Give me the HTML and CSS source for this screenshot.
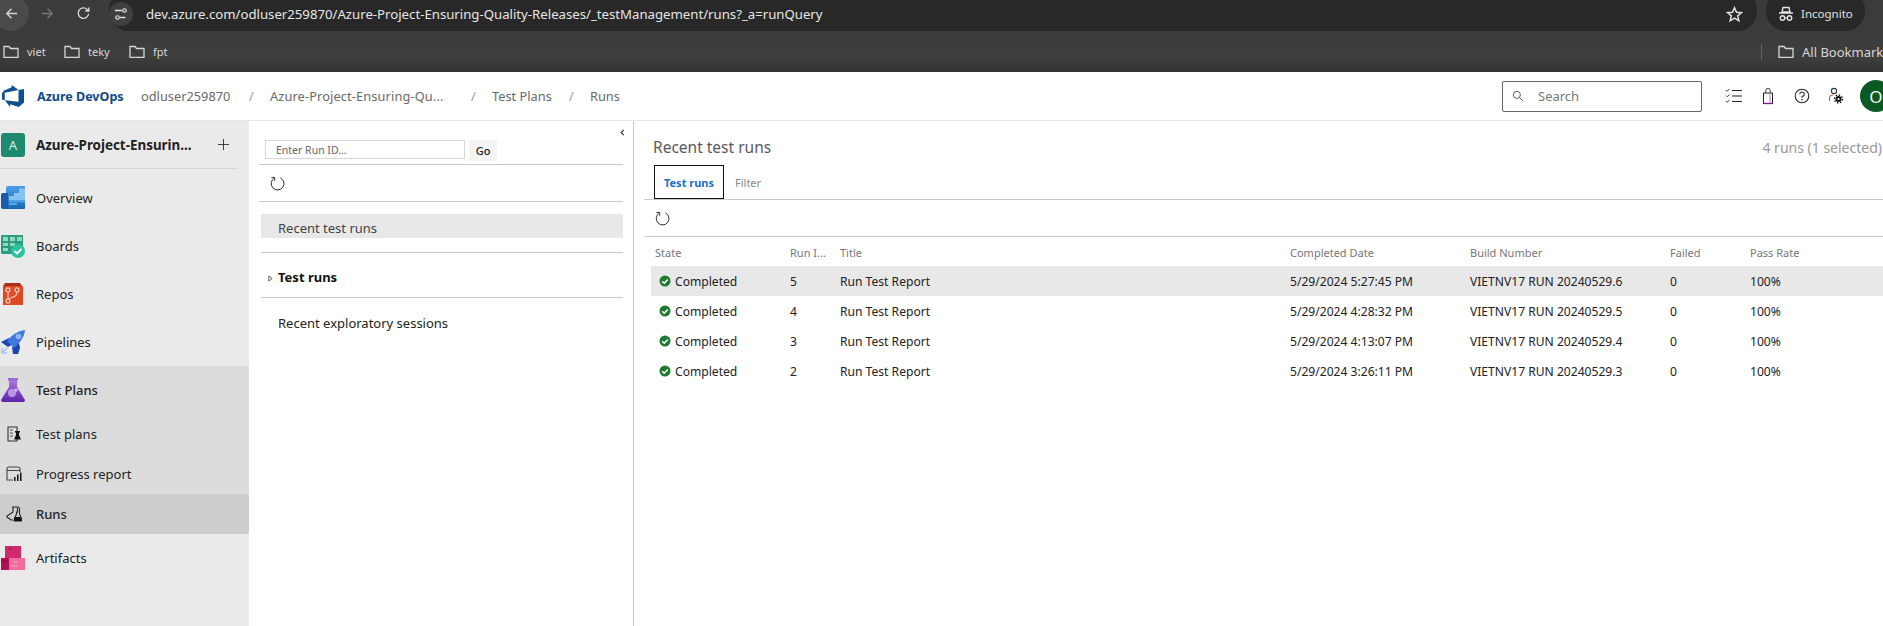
FILE: index.html
```html
<!DOCTYPE html>
<html lang="en">
<head>
<meta charset="utf-8">
<title>Runs - Azure DevOps</title>
<link rel="stylesheet" href="styles.css">
</head>
<body>
<div class="toolbar-chrome">
  <div class="nav-btn nav-back"><svg class="ch-ic" viewBox="0 0 16 16"><path d="M14 8H3M8 3 3 8l5 5" fill="none" stroke="#d6d6d6" stroke-width="1.5"/></svg></div>
  <div class="nav-btn"><svg class="ch-ic" viewBox="0 0 16 16"><path d="M2 8h11M8 3l5 5-5 5" fill="none" stroke="#777" stroke-width="1.5"/></svg></div>
  <div class="nav-btn"><svg class="ch-ic" viewBox="0 0 16 16"><path d="M13.5 8.5A5.6 5.6 0 1 1 12 3.7L13.5 5M13.7 1.5V5.4H9.9" fill="none" stroke="#d6d6d6" stroke-width="1.5"/></svg></div>
  <div class="omnibox">
    <span class="site-info"><svg viewBox="0 0 16 16" width="14" height="14"><path d="M1 4h8M13 12H7" stroke="#e3e3e3" stroke-width="1.5"/><circle cx="12" cy="4" r="2" fill="none" stroke="#e3e3e3" stroke-width="1.4"/><circle cx="4" cy="12" r="2" fill="none" stroke="#e3e3e3" stroke-width="1.4"/></svg></span>
    <span class="url">dev.azure.com/odluser259870/Azure-Project-Ensuring-Quality-Releases/_testManagement/runs?_a=runQuery</span>
    <svg class="star" viewBox="0 0 16 16"><path d="m8 1.6 1.9 4.3 4.6.4-3.5 3 1.1 4.6L8 11.5l-4.100 2.400 1.100-4.600-3.500-3 4.600-.4z" fill="none" stroke="#e3e3e3" stroke-width="1.4"/></svg>
  </div>
  <div class="incognito">
    <svg viewBox="0 0 16 16" width="16" height="16"><path d="M5 1.500h6l1 4.500H4zM1 7h14" fill="none" stroke="#e3e3e3" stroke-width="1.400"/><circle cx="4.500" cy="12" r="2.200" fill="none" stroke="#e3e3e3" stroke-width="1.400"/><circle cx="11.500" cy="12" r="2.200" fill="none" stroke="#e3e3e3" stroke-width="1.400"/><path d="M6.700 12h2.600" stroke="#e3e3e3" stroke-width="1.200"/></svg>
    <span>Incognito</span>
  </div>
</div>

<div class="bookmarks">
  <svg class="folder" viewBox="0 0 16 13"><path d="M1 1.500h5l1.500 2H15v9H1z" fill="none" stroke="#d6d6d6" stroke-width="1.300"/></svg><span class="bm bm-viet">viet</span>
  <svg class="folder" viewBox="0 0 16 13"><path d="M1 1.500h5l1.500 2H15v9H1z" fill="none" stroke="#d6d6d6" stroke-width="1.300"/></svg><span class="bm bm-teky">teky</span>
  <svg class="folder" viewBox="0 0 16 13"><path d="M1 1.500h5l1.500 2H15v9H1z" fill="none" stroke="#d6d6d6" stroke-width="1.300"/></svg><span class="bm">fpt</span>
  <span class="bm-sep"></span>
  <svg class="folder" viewBox="0 0 16 13"><path d="M1 1.500h5l1.500 2H15v9H1z" fill="none" stroke="#d6d6d6" stroke-width="1.300"/></svg><span class="bm bm-all">All Bookmarks</span>
</div>

<header class="topbar">
  <svg class="ado-logo" viewBox="0 0 24 24"><path fill="#10508f" d="M0 8.877 2.247 5.910l8.405-3.416V.022l7.370 5.393L2.966 8.338v8.225L0 15.707zm24-4.450v14.651l-5.753 4.900-9.303-3.057v3.056l-5.978-7.416 15.057 1.798V5.415z"/></svg>
  <span class="brand">Azure DevOps</span>
  <nav class="crumbs">
    <span class="crumb crumb-org">odluser259870</span><span class="slash">/</span>
    <span class="crumb crumb-proj">Azure-Project-Ensuring-Qu...</span><span class="slash">/</span>
    <span class="crumb crumb-plans">Test Plans</span><span class="slash">/</span>
    <span class="crumb">Runs</span>
  </nav>
  <div class="searchbox">
    <svg viewBox="0 0 16 16" width="12" height="12"><circle cx="6.500" cy="6.500" r="4.700" fill="none" stroke="#555" stroke-width="1.300"/><path d="m10 10 4.500 4.500" stroke="#555" stroke-width="1.300"/></svg>
    <span>Search</span>
  </div>
  <div class="top-icons">
    <svg viewBox="0 0 18 18" width="18" height="18"><path d="M7 3.500h10M7 9h10M7 14.500h10" stroke="#222" stroke-width="1.200"/><path d="m1 3 1.300 1.300L4.300 2M1 8.500l1.300 1.300 2-2.300M1 14l1.300 1.300 2-2.300" fill="none" stroke="#444" stroke-width="1"/></svg>
    <svg viewBox="0 0 18 18" width="18" height="18"><rect x="4.500" y="6" width="9" height="10.500" fill="none" stroke="#222" stroke-width="1"/><path d="M6.800 6V3.200a2.200 1.800 0 0 1 4.400 0V6" fill="none" stroke="#444" stroke-width="1"/><path d="M4.500 16.500h9" stroke="#7a1a8a" stroke-width="1.300"/><path d="M11 6.500v9" stroke="#a05ab0" stroke-width=".8"/></svg>
    <svg viewBox="0 0 18 18" width="18" height="18"><circle cx="9" cy="9" r="6.800" fill="none" stroke="#223" stroke-width="1.100"/><path d="M6.800 7.200A2.200 2.200 0 1 1 9 9.400v1.400" fill="none" stroke="#432" stroke-width="1.100"/><circle cx="9" cy="12.800" r=".8" fill="#222"/></svg>
    <svg viewBox="0 0 18 18" width="18" height="18"><circle cx="7" cy="4" r="2.600" fill="none" stroke="#334" stroke-width="1.100"/><path d="M2.500 14V11.500A3.500 3.500 0 0 1 6 8" fill="none" stroke="#a64" stroke-width="1.100"/><circle cx="11.500" cy="12" r="3" fill="#111"/><circle cx="11.500" cy="12" r="4" fill="none" stroke="#111" stroke-width="1.400" stroke-dasharray="1.500 1.600"/><circle cx="11.500" cy="12" r="1.100" fill="#fff"/></svg>
  </div>
  <div class="avatar">O</div>
</header>

<div class="workspace">
  <aside class="sidebar">
    <div class="project">
      <span class="project-badge">A</span>
      <span class="project-name">Azure-Project-Ensurin...</span>
      <svg class="plus" viewBox="0 0 14 14" width="13" height="13"><path d="M7 1v12M1 7h12" stroke="#333" stroke-width="1"/></svg>
    </div>
    <div class="project-rule"></div>
    <div class="nav-gap"></div>
    <div class="nav-row">
      <svg class="nav-ic" viewBox="0 0 24 24"><defs><linearGradient id="ovTop" x1="0" y1="0" x2="0" y2="1"><stop offset="0" stop-color="#4a9fe8"/><stop offset="1" stop-color="#1a66b8"/></linearGradient></defs><path d="M5 2Q5 0 7 0h16q1 0 1 1v21q0 1-1 1H5z" fill="url(#ovTop)"/><path d="M0 9q0-2 2-2h5v16H2q-2 0-2-2z" fill="#1a5ca8"/><path d="M8 10h5V7h5V2.500h6V14H8z" fill="#86c2f2"/><path d="M8 14h16v2.500H8z" fill="#4f9fe6"/><path d="M8 17h8v2H8z" fill="#5aa5e8"/></svg>
      <span>Overview</span>
    </div>
    <div class="nav-row">
      <svg class="nav-ic" viewBox="0 0 24 24"><path d="M0 2q0-1 1-1h20q1 0 1 1v17q0 1-1 1H1q-1 0-1-1z" fill="#2e9a7e"/><path d="M2 3h5v4H2zM9 3h5v4H9zM16 3h5v4h-5zM2 9h5v3H2zM9 9h5v3H9zM2 14h5v3H2z" fill="#8adcc3"/><circle cx="17" cy="17" r="7" fill="#2cc1a0"/><path d="m13.500 17 2.500 2.500 4.500-4.500" fill="none" stroke="#fff" stroke-width="1.800"/></svg>
      <span>Boards</span>
    </div>
    <div class="nav-row">
      <svg class="nav-ic" viewBox="0 0 24 24"><path d="M4 1h15l2 3H2z" fill="#a8301a"/><path d="M2 4h20v19H2z" fill="#dc4a26"/><g fill="none" stroke="#f7c1ac" stroke-width="1.300"><circle cx="7" cy="8" r="2"/><circle cx="16" cy="8" r="2"/><circle cx="7" cy="19" r="2"/><path d="M7 10v7M16 10q0 4-4 5l-5 2"/></g></svg>
      <span>Repos</span>
    </div>
    <div class="nav-row">
      <svg class="nav-ic" viewBox="0 0 24 24"><path d="M0 12 8 8l4 6-5 3z" fill="#1a46b0"/><path d="M11 17l7-4 1 5-2 6h-5z" fill="#1a46b0"/><path d="M6 11Q13 2 23 0q1 0 1 1-2 10-11 17z" fill="#3f78e0"/><circle cx="17.500" cy="6.500" r="2.800" fill="#8fb4f2"/><path d="M1 23h5M1 23v-5M1 23l5-5" stroke="#a9c3f5" stroke-width="1.700" fill="none"/></svg>
      <span>Pipelines</span>
    </div>
    <div class="nav-section">
      <div class="nav-row nav-head">
        <svg class="nav-ic" viewBox="0 0 24 24"><defs><linearGradient id="flask" x1="0" y1="0" x2="0" y2="1"><stop offset="0" stop-color="#a67ddc"/><stop offset=".55" stop-color="#8244c8"/><stop offset="1" stop-color="#5b22a8"/></linearGradient></defs><path d="M8 2h8v7l8 13q0 2-2 2H2q-2 0-2-2L8 9z" fill="url(#flask)"/><path d="M7 0h10v2.500H7z" fill="#9a6bd6"/><circle cx="11" cy="15" r="4" fill="#bb94e6"/><circle cx="15" cy="12" r="1.800" fill="#cdb0ee"/></svg>
        <span>Test Plans</span>
      </div>
      <div class="nav-row nav-sub">
        <svg class="sub-ic" viewBox="0 0 16 16"><path d="M2 1h9v14H2z" fill="none" stroke="#333" stroke-width="1.100"/><path d="M4 4h3M4 7h3M4 10h3" stroke="#555" stroke-width="1.100"/><path d="M9 5h5v1.500h-1V9l2 4.500H8L10 9V6.500H9z" fill="#111"/></svg>
        <span>Test plans</span>
      </div>
      <div class="nav-row nav-sub">
        <svg class="sub-ic" viewBox="0 0 16 16"><path d="M7 14H1V3q0-2 2-2h9q2 0 2 2v3M1 4.500h13" fill="none" stroke="#444" stroke-width="1.100"/><path d="M8 11h1.500v4H8zM11 8.500h1.500V15H11zM14 6.500h1.500V15H14z" fill="#111"/></svg>
        <span>Progress report</span>
      </div>
      <div class="nav-row nav-sub nav-current">
        <svg class="sub-ic" viewBox="0 0 16 16"><path d="M6 1h7M7 1.500v4.500L1 10v1l4 3h2" fill="none" stroke="#222" stroke-width="1.100"/><path d="M11.500 1.500V6h-1v2l-2 4.500v2.500h7V12.500l-2-4.500V1.500" fill="none" stroke="#222" stroke-width="1.100"/><path d="M8.500 11h6l1 4h-8z" fill="#111"/></svg>
        <span>Runs</span>
      </div>
    </div>
    <div class="nav-row">
      <svg class="nav-ic" viewBox="0 0 24 24"><path d="M4 0h16v24H4z" fill="#cf2a6e"/><path d="M8 2h3v1.500H8z" fill="#a81a58"/><path d="M0 12h12v12H0z" fill="#b10f56"/><path d="M8 12h16v12H8z" fill="#ef6c9d"/><path d="M0 15h8" stroke="#8c0b44" stroke-width="1"/><path d="M12 16h4M10 20h7" stroke="#f7a9c6" stroke-width="1.200"/></svg>
      <span>Artifacts</span>
    </div>
  </aside>

  <section class="runs-tree">
    <svg class="collapse" viewBox="0 0 8 8" width="7" height="7"><path d="M5.500 1 2.500 4l3 3" fill="none" stroke="#333" stroke-width="1.300"/></svg>
    <div class="runid-row">
      <input class="runid" type="text" placeholder="Enter Run ID...">
      <span class="go">Go</span>
    </div>
    <div class="tree-rule tree-rule-wide"></div>
    <div class="tree-refresh">
      <svg class="refresh" viewBox="0 0 16 16"><path d="M4.500 2.300A6.800 6.800 0 1 0 11 1.900" fill="none" stroke="#222" stroke-width="1"/><path d="M1.500 1.500h3.500V5" fill="none" stroke="#222" stroke-width="1"/></svg>
    </div>
    <div class="tree-rule tree-rule-wide"></div>
    <div class="tree-current">Recent test runs</div>
    <div class="tree-rule"></div>
    <div class="tree-item tree-bold"><svg class="caret" viewBox="0 0 6 8" width="5" height="7"><path d="M1 1l4 3-4 3z" fill="#fff" stroke="#444"/></svg>Test runs</div>
    <div class="tree-rule"></div>
    <div class="tree-item tree-last">Recent exploratory sessions</div>
  </section>

  <main class="runs-main">
    <div class="main-title">
      <h1>Recent test runs</h1>
      <span class="count">4 runs (1 selected)</span>
    </div>
    <div class="tabs">
      <span class="tab tab-active">Test runs</span>
      <span class="tab">Filter</span>
    </div>
    <div class="main-toolbar">
      <svg class="refresh" viewBox="0 0 16 16"><path d="M4.500 2.300A6.800 6.800 0 1 0 11 1.900" fill="none" stroke="#222" stroke-width="1"/><path d="M1.500 1.500h3.500V5" fill="none" stroke="#222" stroke-width="1"/></svg>
    </div>
    <table class="grid">
      <colgroup>
        <col class="c-state"><col class="c-id"><col class="c-title"><col class="c-date"><col class="c-build"><col class="c-failed"><col class="c-pass">
      </colgroup>
      <thead>
        <tr><th>State</th><th>Run I...</th><th>Title</th><th>Completed Date</th><th>Build Number</th><th>Failed</th><th>Pass Rate</th></tr>
      </thead>
      <tbody>
        <tr class="selected">
          <td class="state"><svg class="ok" viewBox="0 0 12 12"><circle cx="6" cy="6" r="5.500" fill="#1f7a2e"/><path d="m3.200 6.200 2 2 3.600-3.800" fill="none" stroke="#fff" stroke-width="1.500"/></svg>Completed</td>
          <td>5</td><td>Run Test Report</td><td>5/29/2024 5:27:45 PM</td><td>VIETNV17 RUN 20240529.6</td><td>0</td><td>100%</td>
        </tr>
        <tr>
          <td class="state"><svg class="ok" viewBox="0 0 12 12"><circle cx="6" cy="6" r="5.500" fill="#1f7a2e"/><path d="m3.200 6.200 2 2 3.600-3.800" fill="none" stroke="#fff" stroke-width="1.500"/></svg>Completed</td>
          <td>4</td><td>Run Test Report</td><td>5/29/2024 4:28:32 PM</td><td>VIETNV17 RUN 20240529.5</td><td>0</td><td>100%</td>
        </tr>
        <tr>
          <td class="state"><svg class="ok" viewBox="0 0 12 12"><circle cx="6" cy="6" r="5.500" fill="#1f7a2e"/><path d="m3.200 6.200 2 2 3.600-3.800" fill="none" stroke="#fff" stroke-width="1.500"/></svg>Completed</td>
          <td>3</td><td>Run Test Report</td><td>5/29/2024 4:13:07 PM</td><td>VIETNV17 RUN 20240529.4</td><td>0</td><td>100%</td>
        </tr>
        <tr>
          <td class="state"><svg class="ok" viewBox="0 0 12 12"><circle cx="6" cy="6" r="5.500" fill="#1f7a2e"/><path d="m3.200 6.200 2 2 3.600-3.800" fill="none" stroke="#fff" stroke-width="1.500"/></svg>Completed</td>
          <td>2</td><td>Run Test Report</td><td>5/29/2024 3:26:11 PM</td><td>VIETNV17 RUN 20240529.3</td><td>0</td><td>100%</td>
        </tr>
      </tbody>
    </table>
  </main>
</div>
</body>
</html>
```
FILE: styles.css
```css
* { box-sizing: border-box; }
html, body { margin: 0; height: 626px; overflow: hidden; }
body {
  width: 1883px;
  background: #fff;
  color: #222;
  font-family: "Noto Sans", "Open Sans", sans-serif;
  font-size: 12px;
  display: flex;
  flex-direction: column;
}

/* browser chrome */
.toolbar-chrome {
  height: 31px;
  background: #3b3b3b;
  display: flex;
  align-items: center;
  flex: none;
  overflow: hidden;
}
.nav-btn {
  width: 36px;
  height: 36px;
  display: flex;
  align-items: center;
  justify-content: center;
  flex: none;
  margin-top: -5px;
}
.nav-back {
  margin-left: -7px;
  background: #4a4a4a;
  border-radius: 50%;
}
.ch-ic { width: 15px; height: 15px; }
.omnibox {
  width: 1648px;
  margin-left: 8px;
  height: 41px;
  margin-top: -10px;
  padding: 10px 14px 0 0;
  background: #282828;
  border-radius: 20px;
  display: flex;
  align-items: center;
  flex: none;
}
.site-info {
  width: 24px;
  height: 24px;
  border-radius: 50%;
  background: #3f3f3f;
  display: flex;
  align-items: center;
  justify-content: center;
  flex: none;
  margin-top: -4px;
}
.url {
  margin-left: 13px;
  margin-top: -4px;
  color: #e6e6e6;
  font-size: 13.2px;
  white-space: nowrap;
  flex: 1;
}
.star { width: 17px; height: 17px; margin-top: -3px; }
.incognito {
  margin-left: 9px;
  width: 99px;
  height: 41px;
  margin-top: -10px;
  padding: 6px 0 0 12px;
  background: #282828;
  border-radius: 20px;
  display: flex;
  align-items: center;
  gap: 7px;
  color: #e3e3e3;
  font-size: 11.5px;
  flex: none;
}
.bookmarks {
  height: 41px;
  background: linear-gradient(#3a3a3a, #3f3f3f 60%, #333);
  display: flex;
  align-items: center;
  padding-left: 3px;
  color: #d6d6d6;
  font-size: 11px;
  flex: none;
  white-space: nowrap;
  overflow: hidden;
}
.folder { width: 16px; height: 13px; flex: none; }
.bm { margin-left: 8px; width: 37px; flex: none; }
.bm-viet { width: 37px; }
.bm-teky { width: 33px; }
.bm-teky { width: 33px; margin-right: 8px; }
.bm-all { width: auto; font-size: 13px; }
.bm-sep {
  width: 1px;
  height: 16px;
  background: #666;
  margin-left: 1571px;
  margin-right: 16px;
  flex: none;
}

/* page header */
.topbar {
  height: 49px;
  border-bottom: 1px solid #e6e6e6;
  display: flex;
  align-items: center;
  flex: none;
  padding-left: 2px;
  overflow: hidden;
  position: relative;
}
.ado-logo { width: 22px; height: 22px; flex: none; }
.brand {
  margin-left: 13px;
  width: 104px;
  color: #0f4a85;
  font-weight: 700;
  font-size: 12.5px;
  white-space: nowrap;
  flex: none;
}
.crumbs {
  display: flex;
  align-items: center;
  color: #6a6a6a;
  font-size: 12.8px;
  white-space: nowrap;
}
.crumb { flex: none; }
.crumb-org { width: 108px; }
.crumb-proj { width: 201px; letter-spacing: .12px; }
.crumb-plans { width: 77px; }
.slash { width: 21px; flex: none; color: #999; }
.searchbox {
  margin-left: auto;
  width: 200px;
  height: 31px;
  border: 1px solid #666;
  border-radius: 2px;
  display: flex;
  align-items: center;
  padding-left: 9px;
  gap: 14px;
  color: #777;
  font-size: 13px;
  flex: none;
}
.top-icons {
  display: flex;
  align-items: center;
  gap: 16px;
  margin-left: 23px;
  flex: none;
}
.avatar {
  width: 32px;
  height: 32px;
  margin-left: 15px;
  margin-right: -9px;
  border-radius: 50%;
  background: #0b5a24;
  color: #f4f4f4;
  font-size: 17px;
  display: flex;
  align-items: center;
  justify-content: center;
  flex: none;
}

/* layout */
.workspace {
  flex: 1;
  display: flex;
  min-height: 0;
}
.sidebar {
  width: 249px;
  flex: none;
  background: #eaeaea;
  font-size: 13px;
  color: #222;
}
.project {
  height: 47px;
  display: flex;
  align-items: center;
  padding: 0 19px 0 1px;
}
.project-badge {
  width: 24px;
  height: 24px;
  border-radius: 3px;
  background: #1f8a70;
  color: #cfeee5;
  font-size: 13px;
  display: flex;
  align-items: center;
  justify-content: center;
  flex: none;
}
.project-name {
  margin-left: 11px;
  font-weight: 700;
  font-size: 13.4px;
  white-space: nowrap;
  flex: 1;
}
.plus { flex: none; }
.project-rule { height: 1px; width: 238px; background: #d4d4d4; }
.nav-gap { height: 5px; }
.nav-row {
  height: 48px;
  display: flex;
  align-items: center;
  padding-left: 1px;
  gap: 11px;
}
.nav-ic { width: 24px; height: 24px; flex: none; }
.nav-section {
  background: #dcdcdc;
}
.nav-head { height: 48px; font-weight: 500; }
.nav-sub { height: 40px; padding-left: 6px; gap: 14px; }
.sub-ic { width: 16px; height: 16px; flex: none; }
.nav-current {
  background: #cdcdcd;
  font-weight: 500;
  border-radius: 0 3px 3px 0;
}

/* tree pane */
.runs-tree {
  width: 385px;
  flex: none;
  border-right: 1px solid #c8c8c8;
  position: relative;
  font-size: 13px;
}
.collapse { position: absolute; right: 7px; top: 8px; }
.runid-row {
  height: 43px;
  padding: 19px 0 0 16px;
  display: flex;
  align-items: flex-start;
  gap: 4px;
}
.runid {
  width: 200px;
  height: 19px;
  border: 1.500px solid #d8d8d8;
  padding: 0 10px;
  font-family: inherit;
  font-size: 10.500px;
  outline: none;
}
.runid::placeholder { color: #666; opacity: 1; }
.go {
  width: 28px;
  height: 21px;
  background: #f4f4f4;
  font-size: 11px;
  font-weight: 500;
  display: flex;
  align-items: center;
  justify-content: center;
}
.tree-rule {
  height: 1px;
  margin-left: 12px;
  width: 362px;
  background: #c8c8c8;
}
.tree-rule-wide { margin-left: 10px; width: 364px; }
.tree-refresh {
  height: 36px;
  padding-left: 21px;
  display: flex;
  align-items: center;
}
.refresh { width: 15px; height: 15px; flex: none; }
.tree-current {
  margin: 12px 0 14px 12px;
  width: 362px;
  height: 24px;
  background: #e8e8e8;
  padding: 5px 0 0 17px;
  color: #444;
  line-height: 19px;
}
.tree-item {
  height: 44px;
  padding-left: 29px;
  display: flex;
  align-items: center;
  position: relative;
}
.tree-bold { font-weight: 700; color: #111; padding-top: 4px; }
.caret { position: absolute; left: 19px; top: 22px; }
.tree-last { height: 50px; padding-bottom: 0; }

/* main pane */
.runs-main {
  flex: 1;
  min-width: 0;
  overflow: hidden;
}
.main-title {
  height: 44px;
  display: flex;
  justify-content: space-between;
  align-items: center;
  padding: 8px 1px 0 19px;
}
.main-title h1 {
  margin: 0;
  font-size: 15.500px;
  font-weight: 400;
  color: #5a5a5a;
}
.count { color: #999; font-size: 14px; white-space: nowrap; }
.tabs {
  height: 35px;
  margin-left: 10px;
  padding-left: 10px;
  display: flex;
  border-bottom: 1px solid #c8c8c8;
}
.tab {
  height: 34px;
  padding: 0 11px;
  display: flex;
  align-items: center;
  color: #888;
  font-size: 11px;
  font-weight: 400;
}
.tab-active {
  width: 70px;
  padding: 0;
  justify-content: center;
  border: 1.500px solid #111;
  color: #1a6ec7;
  font-weight: 700;
}
.main-toolbar {
  height: 37px;
  margin-left: 10px;
  padding-left: 11px;
  display: flex;
  align-items: center;
  border-bottom: 1px solid #c8c8c8;
}
.grid {
  margin-left: 17px;
  width: 1232px;
  table-layout: fixed;
  border-collapse: collapse;
  font-size: 12.1px;
}
.c-state { width: 135px; }
.c-id { width: 50px; }
.c-title { width: 450px; }
.c-date { width: 180px; }
.c-build { width: 200px; }
.c-failed { width: 80px; }
.grid th {
  height: 29px;
  padding: 2px 0 0 4px;
  text-align: left;
  font-weight: 400;
  font-size: 11px;
  color: #777;
  white-space: nowrap;
}
.grid td {
  height: 30px;
  padding: 0 0 0 4px;
  white-space: nowrap;
  color: #222;
}
.grid .selected td { background: #e8e8e8; }
.grid td.state { padding-left: 8px; }
.ok { width: 12px; height: 12px; margin-right: 4px; vertical-align: -1px; }
```
